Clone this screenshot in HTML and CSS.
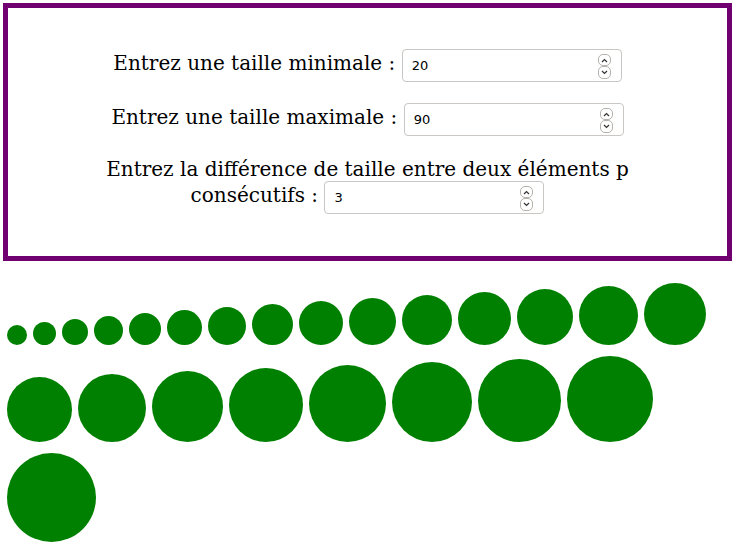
FILE: index.html
```html
<!DOCTYPE html>
<html lang="fr">
<head>
    <meta charset="UTF-8">
    <title>Cercles</title>
    <link rel="stylesheet" href="styles.css">
</head>
<body>
    <div class="panel">
        <p class="row">Entrez une taille minimale : <span class="field"><input type="number" id="min" value="20"><span class="spin"><span class="up"></span><span class="down"></span></span></span></p>
        <p class="row">Entrez une taille maximale : <span class="field"><input type="number" id="max" value="90"><span class="spin"><span class="up"></span><span class="down"></span></span></span></p>
        <p class="row">Entrez la différence de taille entre deux éléments p consécutifs : <span class="field"><input type="number" id="step" value="3"><span class="spin"><span class="up"></span><span class="down"></span></span></span></p>
    </div>
    <div class="circles" id="circles"></div>

    <script>
        function drawCircles() {
            const box = document.getElementById('circles');
            const min = parseInt(document.getElementById('min').value) || 0;
            const max = parseInt(document.getElementById('max').value) || 0;
            const step = parseInt(document.getElementById('step').value) || 1;
            box.innerHTML = '';
            for (let size = min; size <= max; size += step) {
                const c = document.createElement('div');
                c.className = 'circle';
                c.style.width = size + 'px';
                c.style.height = size + 'px';
                box.appendChild(c);
            }
        }

        document.querySelectorAll('input').forEach(input => {
            input.addEventListener('input', drawCircles);
        });
        drawCircles();
    </script>
</body>
</html>
```

FILE: styles.css
```css
body {
    margin: 0;
    font-family: "DejaVu Serif", serif;
    font-size: 20px;
    color: #000;
    background: #fff;
}
.panel {
    margin: 3px;
    border: 5px solid #700070;
    padding: 41px 60px 42px;
    text-align: center;
}
.row {
    margin: 0 0 21px;
}
.row:last-child {
    margin-bottom: 0;
}
.field {
    position: relative;
    display: inline-block;
}
.field input {
    box-sizing: border-box;
    width: 220px;
    height: 33px;
    padding: 0 9px;
    border: 1px solid #c9c6c3;
    border-radius: 4px;
    font-family: "DejaVu Sans", sans-serif;
    font-size: 13px;
    color: #000;
    -moz-appearance: textfield;
}
.field input::-webkit-inner-spin-button,
.field input::-webkit-outer-spin-button {
    -webkit-appearance: none;
    margin: 0;
}
.spin {
    position: absolute;
    right: 11px;
    top: 5px;
    width: 13px;
    display: flex;
    flex-direction: column;
}
.spin span {
    height: 11px;
    border: 1px solid #b5b2ae;
    border-radius: 5px;
    box-sizing: border-box;
    background: #fff no-repeat center;
}
.spin .up {
    height: 12px;
    background-image: url("data:image/svg+xml;utf8,<svg xmlns='http://www.w3.org/2000/svg' width='7' height='5'><path d='M1 4 L3.5 1.5 L6 4' fill='none' stroke='%23333' stroke-width='1.2'/></svg>");
}
.spin .down {
    height: 13px;
    background-image: url("data:image/svg+xml;utf8,<svg xmlns='http://www.w3.org/2000/svg' width='7' height='5'><path d='M1 1 L3.5 3.5 L6 1' fill='none' stroke='%23333' stroke-width='1.2'/></svg>");
}
.circles {
    display: flex;
    flex-wrap: wrap;
    align-items: flex-end;
    gap: 11px 6px;
    margin-top: 22px;
    padding: 0 7px;
}
.circle {
    border-radius: 50%;
    background: green;
}
```
